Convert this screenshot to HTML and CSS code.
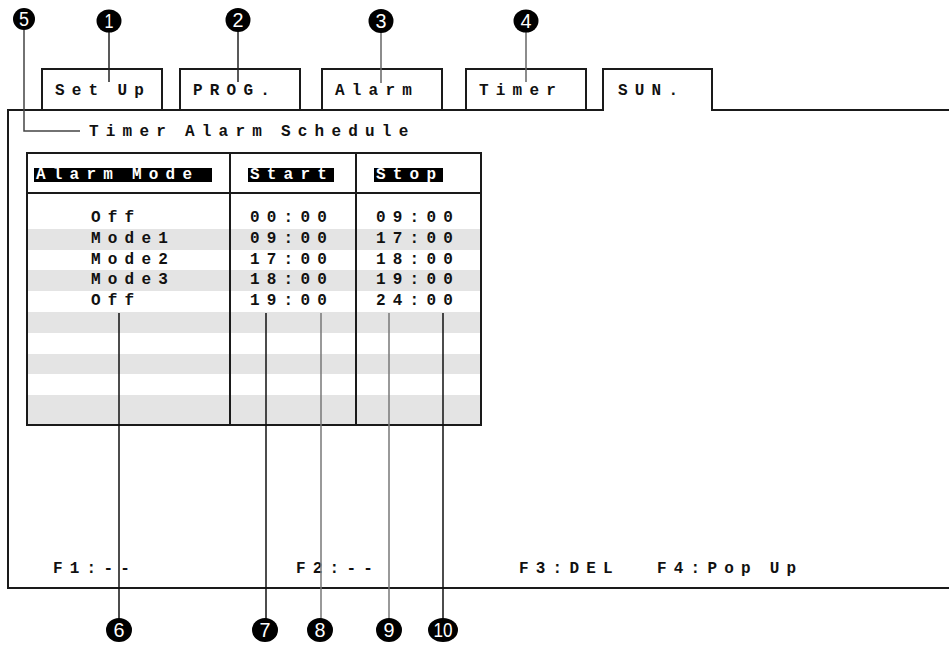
FILE: index.html
```html
<!DOCTYPE html>
<html lang="en">
<head>
  <meta charset="UTF-8">
  <meta name="viewport" content="width=device-width, initial-scale=1.0">
  <title>Timer Alarm Schedule</title>
  <link rel="stylesheet" href="styles.css">
</head>
<body>
  <div class="page">
    <div class="tabs">
      <div class="tab">Set Up</div>
      <div class="tab">PROG.</div>
      <div class="tab">Alarm</div>
      <div class="tab">Timer</div>
      <div class="tab active">SUN.</div>
    </div>

    <div class="panel">
      <div class="title">Timer Alarm Schedule</div>

      <table class="schedule">
        <colgroup>
          <col class="col-mode">
          <col class="col-start">
          <col class="col-stop">
        </colgroup>
        <thead>
          <tr>
            <th class="mode"><span class="label label-mode">Alarm Mode</span></th>
            <th><span class="label">Start</span></th>
            <th><span class="label">Stop</span></th>
          </tr>
        </thead>
        <tbody>
          <tr><td class="mode">Off</td><td>00:00</td><td>09:00</td></tr>
          <tr><td class="mode">Mode1</td><td>09:00</td><td>17:00</td></tr>
          <tr><td class="mode">Mode2</td><td>17:00</td><td>18:00</td></tr>
          <tr><td class="mode">Mode3</td><td>18:00</td><td>19:00</td></tr>
          <tr><td class="mode">Off</td><td>19:00</td><td>24:00</td></tr>
          <tr><td class="mode"></td><td></td><td></td></tr>
          <tr><td class="mode"></td><td></td><td></td></tr>
          <tr><td class="mode"></td><td></td><td></td></tr>
          <tr><td class="mode"></td><td></td><td></td></tr>
          <tr><td class="mode"></td><td></td><td></td></tr>
        </tbody>
      </table>

      <div class="fkeys">
        <span class="fkey f1">F1:--</span>
        <span class="fkey f2">F2:--</span>
        <span class="fkey f3">F3:DEL</span>
        <span class="fkey">F4:Pop Up</span>
      </div>
    </div>

    <!-- numbered callouts drawn over the screen -->
    <svg class="callouts" width="949" height="645" viewBox="0 0 949 645">
      <g fill="none" stroke-width="1.5">
        <line x1="109" y1="30" x2="109" y2="82" stroke="#222"/>
        <line x1="238" y1="30" x2="238" y2="82" stroke="#222"/>
        <line x1="381" y1="30" x2="381" y2="83" stroke="#666"/>
        <line x1="526" y1="30" x2="526" y2="82" stroke="#666"/>
        <polyline points="24,30 24,131 80,131" stroke="#444"/>
        <line x1="119" y1="313" x2="119" y2="620" stroke="#111"/>
        <line x1="266" y1="313" x2="266" y2="620" stroke="#111"/>
        <line x1="321" y1="313" x2="321" y2="620" stroke="#777"/>
        <line x1="389" y1="313" x2="389" y2="620" stroke="#777"/>
        <line x1="443" y1="313" x2="443" y2="620" stroke="#111"/>
      </g>
      <g fill="#000">
        <ellipse cx="24" cy="19" rx="11" ry="11"/>
        <ellipse cx="109" cy="21" rx="12.5" ry="11.5"/>
        <ellipse cx="238" cy="20" rx="12.5" ry="12"/>
        <ellipse cx="381" cy="21" rx="12.5" ry="12"/>
        <ellipse cx="526" cy="21" rx="12.5" ry="11.5"/>
        <ellipse cx="119" cy="630" rx="13" ry="12"/>
        <ellipse cx="265" cy="630" rx="13" ry="12"/>
        <ellipse cx="320" cy="630" rx="13" ry="12"/>
        <ellipse cx="389" cy="630" rx="13" ry="12"/>
        <ellipse cx="443" cy="630" rx="15" ry="12"/>
      </g>
      <g class="num" fill="#fff" text-anchor="middle">
        <text x="24" y="26" textLength="10" lengthAdjust="spacingAndGlyphs">5</text>
        <text x="109" y="28" textLength="9" lengthAdjust="spacingAndGlyphs">1</text>
        <text x="238" y="27" textLength="11" lengthAdjust="spacingAndGlyphs">2</text>
        <text x="381" y="28" textLength="11" lengthAdjust="spacingAndGlyphs">3</text>
        <text x="526" y="28" textLength="11" lengthAdjust="spacingAndGlyphs">4</text>
        <text x="119" y="637" textLength="11" lengthAdjust="spacingAndGlyphs">6</text>
        <text x="265" y="637" textLength="11" lengthAdjust="spacingAndGlyphs">7</text>
        <text x="320" y="637" textLength="11" lengthAdjust="spacingAndGlyphs">8</text>
        <text x="389" y="637" textLength="11" lengthAdjust="spacingAndGlyphs">9</text>
        <text x="443" y="637" textLength="19" lengthAdjust="spacingAndGlyphs">10</text>
      </g>
    </svg>
  </div>
</body>
</html>
```

FILE: styles.css
```css
body {
  margin: 0;
  background: #fff;
  color: #111;
  font-family: "Liberation Mono", "Courier New", monospace;
  font-weight: bold;
  font-size: 16px;
}

.page {
  position: relative;
  width: 949px;
  height: 645px;
  overflow: hidden;
  padding-top: 68px;
  box-sizing: border-box;
}

/* screen text: monospace, wide tracking, tighter word gaps */
.tab,
.title,
.schedule,
.fkeys {
  letter-spacing: 7.2px;
  word-spacing: -4.8px;
  white-space: nowrap;
}

.tabs {
  display: flex;
  align-items: flex-end;
  height: 41px;
  padding-left: 41px;
}

.tab {
  box-sizing: border-box;
  width: 122px;
  height: 41px;
  padding: 11px 0 0 12px;
  border: 2px solid #1a1a1a;
  border-bottom: none;
  line-height: 20px;
}

.tab:nth-child(2) { margin-left: 16px; }
.tab:nth-child(3) { margin-left: 20px; }
.tab:nth-child(4) { margin-left: 22px; }
.tab:nth-child(5) { margin-left: 15px; }

.tab.active {
  width: 111px;
  height: 43px;
  margin-bottom: -2px;
  padding-left: 14px;
  background: #fff;
  position: relative;
  z-index: 1;
}

.panel {
  box-sizing: border-box;
  height: 480px;
  margin-left: 7px;
  border: 2px solid #1a1a1a;
  border-right: none;
  display: flex;
  flex-direction: column;
}

.title {
  margin: 11px 0 0 80px;
  line-height: 20px;
}

.schedule {
  margin: 10px 0 0 17px;
  width: 454px;
  border-collapse: collapse;
  table-layout: fixed;
}

.col-mode { width: 203px; }
.col-start { width: 126px; }
.col-stop { width: 125px; }

.schedule th,
.schedule td {
  border-left: 2px solid #1a1a1a;
  border-right: 2px solid #1a1a1a;
  padding: 0 0 0 17px;
  text-align: left;
}

.schedule th {
  height: 30px;
  padding-bottom: 8px;
  vertical-align: bottom;
  border-top: 2px solid #1a1a1a;
  border-bottom: 2px solid #1a1a1a;
}

.schedule th.mode {
  padding-left: 6px;
}

.label {
  display: inline-block;
  padding-left: 2px;
  line-height: 14px;
  background: #000;
  color: #fff;
}

.label-mode {
  padding-right: 13px;
}

.schedule td {
  height: 20.8px;
  line-height: 20.8px;
  padding-left: 19px;
}

.schedule td.mode {
  padding-left: 63px;
}

.schedule tbody tr:nth-child(even) td {
  background: #e4e4e4;
}

.schedule tbody tr:first-child td {
  height: 34.8px;
  padding-top: 14px;
  box-sizing: border-box;
}

.schedule tbody tr:last-child td {
  height: 28.8px;
  vertical-align: top;
  border-bottom: 2px solid #1a1a1a;
}

.fkeys {
  margin-top: auto;
  display: flex;
  padding: 0 0 8px 44px;
  line-height: 20px;
}

.f1 { width: 243px; }
.f2 { width: 223px; }
.f3 { width: 138px; }

.callouts {
  position: absolute;
  left: 0;
  top: 0;
  pointer-events: none;
}

.num {
  font-family: "Liberation Sans Narrow", "Liberation Sans", Arial, sans-serif;
  font-weight: normal;
  font-size: 20px;
  letter-spacing: 0;
}
```
